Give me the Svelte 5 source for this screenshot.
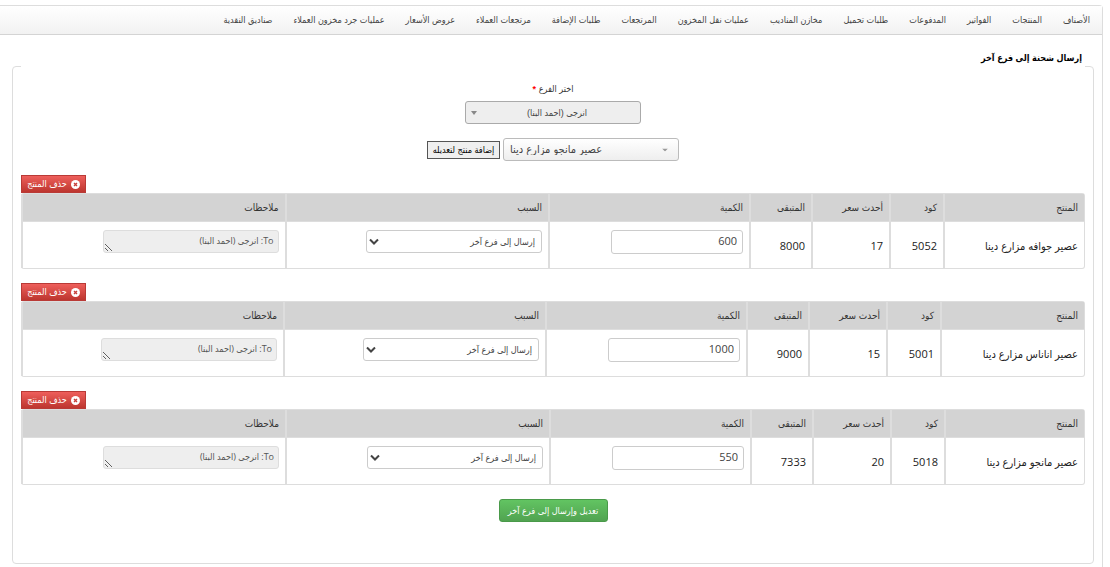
<script>
  const navItems = [
    "الأصناف",
    "المنتجات",
    "الفواتير",
    "المدفوعات",
    "طلبات تحميل",
    "مخازن المناديب",
    "عمليات نقل المخزون",
    "المرتجعات",
    "طلبات الإضافة",
    "مرتجعات العملاء",
    "عروض الأسعار",
    "عمليات جرد مخزون العملاء",
    "صناديق النقدية",
  ];

  const branch = "انرجى (احمد البنا)";
  const reason = "إرسال إلى فرع آخر";

  let items = $state([
    { name: "عصير جوافه مزارع دينا", code: 5052, price: 17, left: 8000, qty: "600", width: 141 },
    { name: "عصير اناناس مزارع دينا", code: 5001, price: 15, left: 9000, qty: "1000", width: 144 },
    { name: "عصير مانجو مزارع دينا", code: 5018, price: 20, left: 7333, qty: "550", width: 140 },
  ]);

  const remove = (code) => {
    items = items.filter((d) => d.code !== code);
  };
</script>

<div class="page" dir="rtl">
  <nav>
    {#each navItems as item}
      <a href="#top">{item}</a>
    {/each}
  </nav>

  <form onsubmit={(e) => e.preventDefault()}>
    <fieldset>
      <legend>إرسال شحنة إلى فرع آخر</legend>

      <label class="branch-label" for="branch">اختر الفرع <span>*</span></label>
      <div class="picker branch">
        <select id="branch">
          <option>{branch}</option>
        </select>
        <svg width="6" height="4" viewBox="0 0 6 4"><path d="M0 0h6L3 4z" fill="#888" /></svg>
      </div>

      <div class="add">
        <div class="picker product" dir="ltr">
          <select aria-label="المنتج">
            <option>عصير مانجو مزارع دينا</option>
          </select>
          <svg width="6" height="3" viewBox="0 0 6 3"><path d="M0 0h6L3 3z" fill="#999" /></svg>
        </div>
        <button type="button" class="add-button">إضافة منتج لتعديله</button>
      </div>

      {#each items as item (item.code)}
        <section>
          <button type="button" class="delete" onclick={() => remove(item.code)}>
            <svg width="9" height="9" viewBox="0 0 9 9">
              <circle cx="4.5" cy="4.5" r="4.5" fill="#fff" />
              <path d="M3 3l3 3M6 3L3 6" stroke="#c8403b" stroke-width="1.4" />
            </svg>
            حذف المنتج
          </button>
          <table>
            <colgroup>
              <col style="width: {item.width}px" />
              <col class="code" />
              <col class="price" />
              <col class="left" />
              <col class="qty" />
              <col />
              <col />
            </colgroup>
            <thead>
              <tr>
                <th>المنتج</th>
                <th>كود</th>
                <th>أحدث سعر</th>
                <th>المتبقى</th>
                <th>الكمية</th>
                <th>السبب</th>
                <th>ملاحظات</th>
              </tr>
            </thead>
            <tbody>
              <tr>
                <td>{item.name}</td>
                <td>{item.code}</td>
                <td>{item.price}</td>
                <td>{item.left}</td>
                <td class="field">
                  <input type="text" aria-label="الكمية" bind:value={item.qty} />
                </td>
                <td class="field">
                  <div class="picker reason">
                    <select aria-label="السبب">
                      <option>{reason}</option>
                    </select>
                    <svg width="10" height="7" viewBox="0 0 10 7">
                      <path d="M1 1l4 4 4-4" fill="none" stroke="#444" stroke-width="2" />
                    </svg>
                  </div>
                </td>
                <td class="field">
                  <textarea aria-label="ملاحظات" readonly>To: {branch}</textarea>
                </td>
              </tr>
            </tbody>
          </table>
        </section>
      {/each}

      <button type="submit" class="submit">تعديل وإرسال إلى فرع آخر</button>
    </fieldset>
  </form>
</div>

<style>
  :global(body) {
    background: #fff;
  }

  .page {
    box-sizing: border-box;
    margin: 5px 7px 0 0;
    padding-bottom: 3px;
    border: 1px solid #ddd;
    border-width: 1px 1px 0 0;
    border-top-right-radius: 4px;
    font-family: "Liberation Sans", "DejaVu Sans Condensed", "DejaVu Sans", sans-serif;
    font-size: 9px;
    color: #333;
  }

  input,
  select,
  textarea,
  button {
    box-sizing: border-box;
    margin: 0;
    font-family: inherit;
    font-size: 9px;
  }

  nav {
    display: flex;
    gap: 21px;
    height: 28px;
    padding: 0 12px;
    align-items: center;
    border-bottom: 1px solid #d4d4d4;
    background: linear-gradient(#fff, #f2f2f2);
  }

  nav a {
    color: #444;
    text-decoration: none;
    white-space: nowrap;
  }

  form {
    padding: 13px 8px 0 12px;
  }

  fieldset {
    display: flex;
    flex-direction: column;
    align-items: center;
    min-width: 0;
    margin: 0;
    padding: 0 8px 41px;
    border: 1px solid #ddd;
    border-radius: 4px;
  }

  legend {
    box-sizing: border-box;
    width: 100%;
    padding: 0 3px 16px;
    font-weight: bold;
    line-height: 20px;
    color: #000;
  }

  .branch-label {
    line-height: 10px;
  }

  .branch-label span {
    font-weight: bold;
    color: #f00;
  }

  .picker {
    position: relative;
    width: 176px;
  }

  .picker select {
    display: block;
    width: 100%;
    height: 23px;
    border: 1px solid #aaa;
    border-radius: 3px;
    appearance: none;
    color: #444;
  }

  .picker svg {
    position: absolute;
    top: 50%;
    transform: translateY(-50%);
    pointer-events: none;
  }

  .branch {
    margin: 7px 0 14px;
  }

  .branch select {
    padding: 0 0 0 8px;
    background: #eee;
    text-align: center;
  }

  .branch svg {
    left: 6px;
  }

  .add {
    display: flex;
    gap: 3px;
    align-items: center;
    margin-bottom: 14px;
  }

  .product select {
    padding: 0 6px 2px;
    border-color: #bbb;
    background: linear-gradient(#fff, #eee);
    font-size: 11px;
  }

  .product svg {
    right: 11px;
  }

  .add-button {
    width: 73px;
    height: 18px;
    padding: 0;
    border: 1px solid #555;
    background: #efefef;
    color: #000;
    white-space: nowrap;
  }

  section {
    width: 100%;
    margin-bottom: 14px;
  }

  .delete {
    display: flex;
    gap: 4px;
    align-items: center;
    justify-content: center;
    width: 65px;
    height: 18px;
    margin-right: auto;
    padding: 0;
    border: 1px solid #b93a36;
    background: linear-gradient(#ee5f5b, #bd362f);
    color: #fff;
    white-space: nowrap;
  }

  table {
    width: 100%;
    table-layout: fixed;
    border: 1px solid #ddd;
    border-left: 0;
    border-radius: 3px;
    border-spacing: 0;
    font-family: "Open Sans", "DejaVu Sans Condensed", "DejaVu Sans", sans-serif;
    font-size: 11px;
  }

  .code {
    width: 54px;
  }

  .price {
    width: 78px;
  }

  .left {
    width: 62px;
  }

  .qty {
    width: 201px;
  }

  th,
  td {
    box-sizing: border-box;
    padding: 0 6px;
    border-left: 2px solid #ddd;
    text-align: right;
    white-space: nowrap;
  }

  th {
    height: 27px;
    padding-bottom: 2px;
    background: #d3d3d3;
    font-size: 10px;
    font-weight: normal;
  }

  td {
    height: 47px;
    border-top: 1px solid #ddd;
    color: #222;
  }

  td.field {
    padding-top: 8px;
    vertical-align: top;
  }

  td input {
    display: block;
    width: 132px;
    height: 24px;
    padding: 0 5px 3px;
    border: 1px solid #ccc;
    border-radius: 3px;
    font-family: "Open Sans", sans-serif;
    font-size: 11px;
    color: #444;
  }

  .reason select {
    padding: 0 6px;
    border-color: #ccc;
    background: #fff;
  }

  .reason svg {
    left: 3px;
  }

  textarea {
    display: block;
    width: 176px;
    height: 23px;
    padding: 4px;
    border: 1px solid #ddd;
    border-radius: 3px;
    overflow: hidden;
    background: #eee;
    color: #555;
    line-height: 12px;
    resize: both;
  }

  .submit {
    width: 109px;
    height: 23px;
    padding: 0;
    border: 1px solid #4a9a4a;
    border-radius: 3px;
    background: linear-gradient(#62c462, #51a351);
    color: #fff;
    white-space: nowrap;
  }
</style>
